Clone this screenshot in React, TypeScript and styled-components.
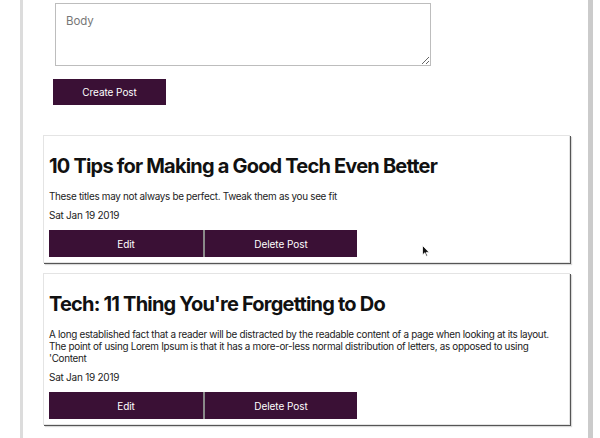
import React from "react";
import styled, { createGlobalStyle } from "styled-components";

const Global = createGlobalStyle`
  html, body { margin: 0; padding: 0; background: #fff; }
  body { font-family: Inter, "Noto Sans", sans-serif; color: #111; }
`;

const Frame = styled.div`
  margin-left: 20px;
  width: 565px;
  min-height: 438px;
  border-left: 3px solid #dcdcdc;
  border-right: 5px solid #cbcbcb;
  padding-top: 3px;
  box-sizing: content-box;
`;

const Form = styled.div`
  display: flex;
  flex-direction: column;
  align-items: flex-start;
  padding-left: 30px;
`;

const BodyInput = styled.textarea`
  margin-left: 2px;
  width: 376px;
  height: 63px;
  box-sizing: border-box;
  border: 1px solid #bdbdbd;
  padding: 10px 10px;
  font-family: Inter, sans-serif;
  font-size: 11.5px;
  letter-spacing: -0.1px;
  color: #333;
  resize: vertical;
  outline: none;
  &::placeholder { color: #777; }
`;

const CreateButton = styled.button`
  margin-top: 13px;
  width: 113px;
  height: 26px;
  background: #3a1035;
  color: #fff;
  border: none;
  font-family: Inter, sans-serif;
  font-size: 10px;
  letter-spacing: -0.05px;
  cursor: pointer;
`;

const Posts = styled.div`
  display: flex;
  flex-direction: column;
  gap: 10px;
  margin-top: 30px;
  padding-left: 20px;
`;

const Card = styled.div`
  position: relative;
  width: 527px;
  box-sizing: border-box;
  border: 1px solid #e4e4e4;
  box-shadow: 1px 1px 0 #555, 2px 2px 1px rgba(0,0,0,0.15);
  padding: 0 5px 5px 5px;
  background: #fff;
`;

const Title = styled.h2`
  margin: 17px 0 0;
  font-size: 20px;
  line-height: 26px;
  font-weight: 700;
  color: #111;
  letter-spacing: -0.8px;
`;

const Text = styled.p`
  margin: 11px 0 0;
  font-size: 9.9px;
  line-height: 12px;
  color: #222;
  letter-spacing: -0.3px;
  padding-right: 8px;
`;

const DateLine = styled.div`
  margin-top: 6px;
  font-size: 10px;
  line-height: 14px;
  letter-spacing: -0.25px;
  color: #222;
`;

const Actions = styled.div`
  display: flex;
  margin-top: 8px;
`;

const ActionButton = styled.button<{ $first?: boolean }>`
  width: 154px;
  height: 27px;
  background: #3a1035;
  color: #fff;
  border: none;
  border-left: ${(p) => (p.$first ? "none" : "2px solid #8a8a8a")};
  font-family: Inter, sans-serif;
  font-size: 10px;
  letter-spacing: -0.05px;
  cursor: pointer;
`;

const Cursor = styled.svg`
  position: absolute;
  left: 378px;
  top: 109px;
`;

const posts = [
  {
    title: "10 Tips for Making a Good Tech Even Better",
    body: "These titles may not always be perfect. Tweak them as you see fit",
    date: "Sat Jan 19 2019",
    cursor: true,
  },
  {
    title: "Tech: 11 Thing You're Forgetting to Do",
    body:
      "A long established fact that a reader will be distracted by the readable content of a page when looking at its layout. The point of using Lorem Ipsum is that it has a more-or-less normal distribution of letters, as opposed to using 'Content",
    date: "Sat Jan 19 2019",
    cursor: false,
  },
];

export default function App() {
  return (
    <>
      <Global />
      <Frame>
        <Form>
          <BodyInput placeholder="Body" />
          <CreateButton>Create Post</CreateButton>
        </Form>
        <Posts>
          {posts.map((p) => (
            <Card key={p.title}>
              <Title>{p.title}</Title>
              <Text>{p.body}</Text>
              <DateLine>{p.date}</DateLine>
              <Actions>
                <ActionButton $first>Edit</ActionButton>
                <ActionButton>Delete Post</ActionButton>
              </Actions>
              {p.cursor && (
                <Cursor width="8" height="12" viewBox="0 0 8 12">
                  <path d="M0.5 0.5 L0.5 10 L2.8 7.8 L4.4 11.3 L5.6 10.8 L4.1 7.4 L7.2 7.4 Z" fill="#111" stroke="#fff" strokeWidth="0.8" />
                </Cursor>
              )}
            </Card>
          ))}
        </Posts>
      </Frame>
    </>
  );
}
